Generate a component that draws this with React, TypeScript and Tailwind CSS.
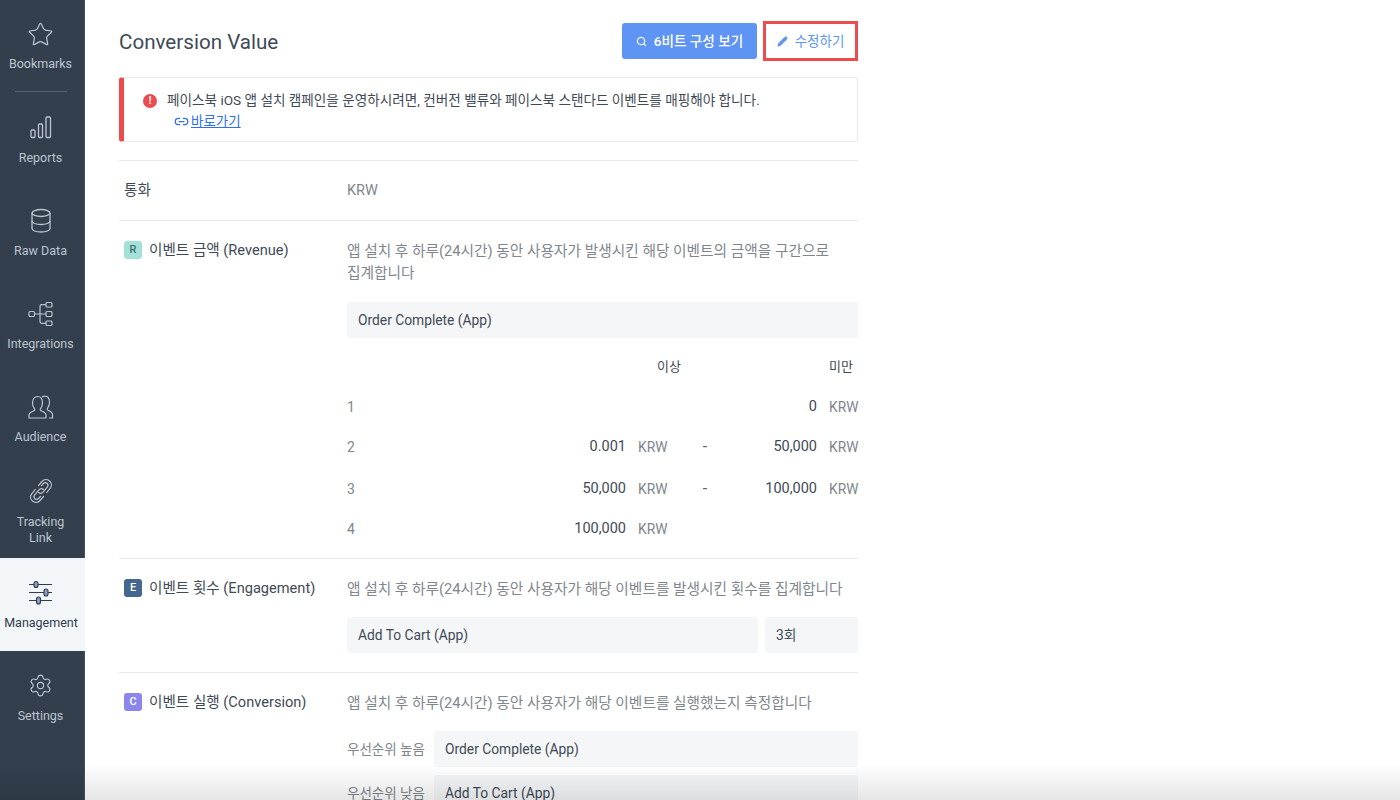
import React from 'react'
import { Search, Pencil, Link2, Settings, Star } from 'lucide-react'

const BarsIcon = () => (
    <svg width="26" height="26" viewBox="0 0 26 26" fill="none" stroke="currentColor" strokeWidth="1.3">
        <rect x="3" y="15" width="4" height="7.5" rx="1" />
        <rect x="10.5" y="9" width="4" height="13.5" rx="1" />
        <rect x="18" y="2" width="4.5" height="20.5" rx="1" />
    </svg>
)

const DatabaseIcon = () => (
    <svg width="26" height="26" viewBox="0 0 26 26" fill="none" stroke="currentColor" strokeWidth="1.3">
        <ellipse cx="13" cy="5" rx="9" ry="3.5" />
        <path d="M4 5v15.500c0 2 4 3.500 9 3.500s9-1.500 9-3.500V5" />
        <path d="M4 13c0 2 4 3.500 9 3.500s9-1.500 9-3.500" />
    </svg>
)

const IntegrationsIcon = () => (
    <svg width="26" height="26" viewBox="0 0 26 26" fill="none" stroke="currentColor" strokeWidth="1.2">
        <rect x="1" y="10.500" width="5.500" height="5" rx="1" />
        <rect x="18" y="1.500" width="6" height="4.500" rx="1" />
        <rect x="18" y="10.500" width="6" height="5" rx="1" />
        <rect x="18" y="20" width="6" height="4.500" rx="1" />
        <path d="M6.500 13H18M12 13V5.500a1.800 1.800 0 0 1 1.800-1.800H18M12 13v7.500a1.800 1.800 0 0 0 1.800 1.800H18" />
    </svg>
)

const AudienceIcon = () => (
    <svg width="26" height="26" viewBox="0 0 26 26" fill="none" stroke="currentColor" strokeWidth="1.2" strokeLinejoin="round">
        <path d="M1 24v-3c0-2.200 2.500-3.300 5-4.300 1-.4 1-1.500.3-2.400C5 12.700 4.500 11 4.500 9 4.500 5 6.500 2.500 9.500 2.500s5 2.500 5 6.500c0 2-.5 3.700-1.800 5.300-.7.900-.7 2 .3 2.400 2.500 1 5 2.100 5 4.300v3z" />
        <path d="M14 3c.8-.5 1.800-.8 2.800-.8 3 0 4.700 2.500 4.700 6.300 0 2-.6 3.800-1.800 5.300-.7.900-.6 2 .3 2.400 2 .9 4.500 2 4.500 4.300V24h-3.500" />
    </svg>
)

const ChainIcon = () => (
    <svg width="26" height="26" viewBox="0 0 26 26" fill="none" stroke="currentColor" strokeWidth="1.2" strokeLinecap="round">
        <path d="M10.500 7.500l3.500-4a5.300 5.300 0 0 1 8.500 6.300l-3.700 4.700" />
        <path d="M13.500 7.700l2-2.200a2.600 2.600 0 0 1 4 3.300l-4.500 5.400c-1.300 1.500-3.300 1.500-4.300.3" />
        <path d="M15.500 18.500l-3.500 4a5.300 5.300 0 0 1-8.500-6.300l3.700-4.700" />
        <path d="M12.500 18.300l-2 2.200a2.600 2.600 0 0 1-4-3.300l4.500-5.400c1.300-1.500 3.300-1.500 4.300-.3" />
    </svg>
)

const SlidersIcon = () => (
    <svg width="26" height="26" viewBox="0 0 26 26" fill="none" stroke="#2f3c4b" strokeWidth="1.1">
        <path d="M1 4.500h23M1 12.500h23M1 20.500h23" />
        <rect x="6" y="1.500" width="4" height="6" rx="2" fill="#8b9dbd" />
        <rect x="16" y="9" width="4" height="7" rx="2" fill="#8b9dbd" />
        <rect x="8.500" y="17" width="4" height="7" rx="2" fill="#8b9dbd" />
    </svg>
)

const navItems = [
    { label: 'Reports', icon: <BarsIcon /> },
    { label: 'Raw Data', icon: <DatabaseIcon /> },
    { label: 'Integrations', icon: <IntegrationsIcon /> },
    { label: 'Audience', icon: <AudienceIcon /> },
]

const Sidebar = () => {
    return (
        <aside className="w-[85px] shrink-0 bg-[#333f4d] border-r border-[#48525f] text-[#bcc5cf] text-[12.500px] leading-4">
            <div className="relative h-[93px] flex flex-col items-center pt-[21px] pr-[3px]">
                <Star size={27} strokeWidth={1.1} />
                <span className="mt-[8px]">Bookmarks</span>
                <div className="absolute bottom-[1px] left-[15px] w-[52px] h-[1px] bg-[#566270]"></div>
            </div>
            {navItems.map((item) => (
                <div key={item.label} className="h-[93px] flex flex-col items-center pt-[22px] pr-[3px]">
                    {item.icon}
                    <span className="mt-[9px]">{item.label}</span>
                </div>
            ))}
            <div className="h-[93px] flex flex-col items-center pt-[13px] pr-[3px]">
                <ChainIcon />
                <span className="mt-[10px] text-center">Tracking<br />Link</span>
            </div>
            <div className="h-[93px] flex flex-col items-center pt-[22px] pr-[3px] bg-[#f3f6f9] text-[#2f3c4b] w-[85px]">
                <SlidersIcon />
                <span className="mt-[9px]">Management</span>
            </div>
            <div className="h-[93px] flex flex-col items-center pt-[22px] pr-[3px]">
                <Settings size={25} strokeWidth={1.1} />
                <span className="mt-[10px]">Settings</span>
            </div>
        </aside>
    )
}

const Badge = ({ letter, className }: { letter: string; className: string }) => (
    <span className={`w-[18px] h-[18px] rounded-[3px] flex items-center justify-center text-[11px] font-medium shrink-0 ${className}`}>{letter}</span>
)

const Field = ({ text, className = '' }: { text: string; className?: string }) => (
    <div className={`h-9 rounded-[3px] bg-[#f5f6f8] flex items-center px-[11px] text-[13.800px] text-[#3f4a57] ${className}`}>{text}</div>
)

const rangeCols = 'grid grid-cols-[279px_12px_29px_76px_74px_12px_29px] items-center h-5 leading-5 text-[14.500px]'

const RangeRow = ({ no, from, to, className }: { no: string; from?: string; to?: string; className: string }) => (
    <div className={`${rangeCols} ${className}`}>
        <div className="flex justify-between">
            <span className="text-[#80868e] text-[14px]">{no}</span>
            <span className="text-[#3f4a57]">{from}</span>
        </div>
        <span></span>
        <span className="text-[#80868e] text-[13.800px]">{from ? 'KRW' : ''}</span>
        <span className="text-center text-[#5b6570] text-[16px]">{from && to ? '-' : ''}</span>
        <span className="text-right text-[#3f4a57]">{to}</span>
        <span></span>
        <span className="text-[#80868e] text-[13.800px]">{to ? 'KRW' : ''}</span>
    </div>
)

const RowLabel = ({ badge, text }: { badge?: React.ReactNode; text: string }) => (
    <div className="w-[228px] shrink-0 pl-[5px] flex items-center gap-[7px] h-[22px] text-[14.600px] text-[#3f4a57]">
        {badge}
        <span className="relative top-[1px]">{text}</span>
    </div>
)

const App = () => {
    return (
        <div className="relative h-screen w-full overflow-hidden flex bg-white font-['Roboto','Noto_Sans_CJK_KR',sans-serif]">
            <Sidebar />
            <main className="w-[739px] ml-[34px] shrink-0">
                <div className="flex items-center h-10 mt-[21px]">
                    <h1 className="text-[20.600px] text-[#3f4a57] flex-1 pt-[3px]">Conversion Value</h1>
                    <button className="h-9 w-[135px] rounded-[3px] bg-[#5e94f4] text-white text-[13.600px] font-medium flex items-center justify-center gap-[7px]">
                        <Search size={11} strokeWidth={2.5} />
                        6비트 구성 보기
                    </button>
                    <button className="h-10 w-[95px] ml-[6px] border-[3px] border-[#ee4b4f] text-[#5e94f4] text-[13.500px] flex items-center justify-center gap-[7px]">
                        <Pencil size={11} fill="currentColor" />
                        수정하기
                    </button>
                </div>

                <div className="mt-4 h-[65px] rounded-[3px] border border-[#e8eaed] border-l-[5px] border-l-[#ee4b4f] pl-[19px] pt-[12px] text-[13.600px] leading-[21px] text-[#3f4a57]">
                    <div className="flex items-center gap-[10px]">
                        <span className="w-[14px] h-[14px] rounded-full bg-[#ee4b4f] text-white text-[10px] font-bold flex items-center justify-center">!</span>
                        <span>페이스북 iOS 앱 설치 캠페인을 운영하시려면, 컨버전 밸류와 페이스북 스탠다드 이벤트를 매핑해야 합니다.</span>
                    </div>
                    <div className="flex items-center gap-[2px] ml-[31px]">
                        <Link2 size={15} className="text-[#2f6fe8]" />
                        <a className="text-[#2f6fe8] underline text-[13.500px]">바로가기</a>
                    </div>
                </div>

                <div className="mt-[18px] border-t border-[#e8eaed] h-[60px] flex pt-[18px]">
                    <RowLabel text="통화" />
                    <span className="text-[#80868e] leading-[22px] text-[14.500px] relative top-[1px]">KRW</span>
                </div>

                <div className="border-t border-[#e8eaed] h-[338px] flex pt-[18px]">
                    <RowLabel badge={<Badge letter="R" className="bg-[#a3e2d9] text-[#3f6f68]" />} text="이벤트 금액 (Revenue)" />
                    <div className="flex-1 text-[14.700px]">
                        <p className="leading-[22px] text-[#80868e] pt-[1px]">앱 설치 후 하루(24시간) 동안 사용자가 발생시킨 해당 이벤트의 금액을 구간으로<br />집계합니다</p>
                        <Field text="Order Complete (App)" className="mt-[18px]" />
                        <div className="grid grid-cols-[334px_1fr] mt-[19px] text-[13px] leading-5 text-[#3f4a57]">
                            <span className="text-right">이상</span>
                            <span className="text-right pr-[5px]">미만</span>
                        </div>
                        <RangeRow no="1" to="0" className="mt-[20px]" />
                        <RangeRow no="2" from="0.001" to="50,000" className="mt-[20px]" />
                        <RangeRow no="3" from="50,000" to="100,000" className="mt-[22px]" />
                        <RangeRow no="4" from="100,000" className="mt-[20px]" />
                    </div>
                </div>

                <div className="border-t border-[#e8eaed] h-[114px] flex pt-[18px]">
                    <RowLabel badge={<Badge letter="E" className="bg-[#44678f] text-white" />} text="이벤트 횟수 (Engagement)" />
                    <div className="flex-1 text-[14.700px]">
                        <p className="leading-[22px] text-[#80868e] whitespace-nowrap pt-[1px]">앱 설치 후 하루(24시간) 동안 사용자가 해당 이벤트를 발생시킨 횟수를 집계합니다</p>
                        <div className="flex gap-[7px] mt-[17px]">
                            <Field text="Add To Cart (App)" className="flex-1" />
                            <Field text="3회" className="w-[93px]" />
                        </div>
                    </div>
                </div>

                <div className="border-t border-[#e8eaed] flex pt-[18px]">
                    <RowLabel badge={<Badge letter="C" className="bg-[#8a86ec] text-white" />} text="이벤트 실행 (Conversion)" />
                    <div className="flex-1 text-[14.700px]">
                        <p className="leading-[22px] text-[#80868e] pt-[1px]">앱 설치 후 하루(24시간) 동안 사용자가 해당 이벤트를 실행했는지 측정합니다</p>
                        <div className="flex items-center mt-[17px]">
                            <span className="w-[87px] text-[13.500px] text-[#80868e]">우선순위 높음</span>
                            <Field text="Order Complete (App)" className="flex-1" />
                        </div>
                        <div className="flex items-center mt-[8px]">
                            <span className="w-[87px] text-[13.500px] text-[#80868e]">우선순위 낮음</span>
                            <Field text="Add To Cart (App)" className="flex-1" />
                        </div>
                    </div>
                </div>
            </main>
            <div className="absolute bottom-0 left-0 right-0 h-[36px] bg-gradient-to-b from-transparent to-black/10 pointer-events-none"></div>
        </div>
    )
}

export default App
